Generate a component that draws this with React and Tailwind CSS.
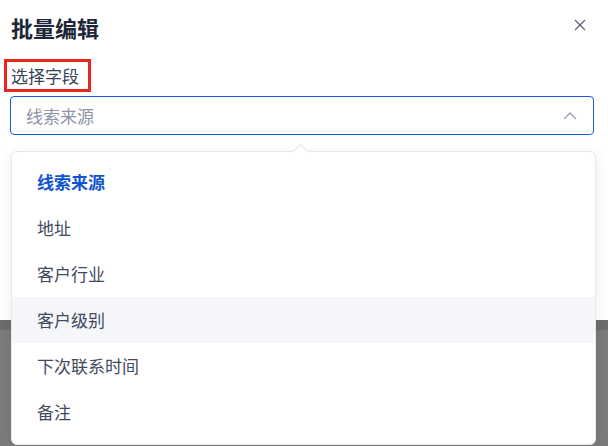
import React from "react";

const fields = ["线索来源", "地址", "客户行业", "客户级别", "下次联系时间", "备注"];

const font = { fontFamily: "'Noto Sans CJK SC', 'Noto Sans', sans-serif" };

export default function App() {
  return (
    <div className="relative w-[608px] h-[446px] overflow-hidden bg-white" style={font}>
      {/* modal body */}
      <div className="h-[320px] bg-white px-[10px] pt-[12px]">
        <div className="flex items-center justify-between">
          <h1 className="pl-[1px] text-[22px] leading-[30px] font-bold text-[#1d2638]">批量编辑</h1>
          <button className="mr-[12px] -mt-[4px] text-[#5a6478]">
            <svg width="12" height="12" viewBox="0 0 12 12" fill="none" stroke="currentColor" strokeWidth="1.3">
              <path d="M1 1L11 11M11 1L1 11" />
            </svg>
          </button>
        </div>

        <div className="mt-[17px] -ml-[6px] w-[87px] h-[33px] border-[3px] border-[#e8261c] pl-[4px] flex items-center">
          <span className="text-[17px] leading-[22px] text-[#3a4457]">选择字段</span>
        </div>

        <div className="mt-[4px] w-[584px] h-[39px] flex items-center justify-between border border-[#1a5dd8] rounded-[4px] pl-[15px] pr-[16px]">
          <span className="text-[17px] text-[#8c94a5]">线索来源</span>
          <svg width="14" height="8" viewBox="0 0 14 8" fill="none" stroke="#9aa2b1" strokeWidth="1.3">
            <path d="M1 7L7 1L13 7" />
          </svg>
        </div>
      </div>

      {/* mask below the modal */}
      <div className="h-[126px] bg-[#7b7b7b] border-t-[10px] border-[#6c6c6c]" />

      {/* dropdown popup */}
      <div className="absolute left-[11px] top-[151px] w-[585px] h-[294px] bg-white rounded-[6px] border border-[#e6e8f0] shadow-[0_3px_14px_rgba(0,0,0,0.08)] py-[7px]">
        <div className="absolute -top-[6px] left-[283px] w-[11px] h-[11px] bg-white rotate-45 border-l border-t border-[#e6e8f0]" />
        {fields.map((f, i) => (
          <div
            key={f}
            className={
              i === 3
                ? "h-[46px] flex items-center pl-[25px] text-[17px] bg-[#f5f6fa] text-[#3f4a5e]"
                : i === 0
                ? "h-[46px] flex items-center pl-[25px] text-[17px] font-bold text-[#0f55cf]"
                : "h-[46px] flex items-center pl-[25px] text-[17px] text-[#3f4a5e]"
            }
          >
            {f}
          </div>
        ))}
      </div>
    </div>
  );
}
